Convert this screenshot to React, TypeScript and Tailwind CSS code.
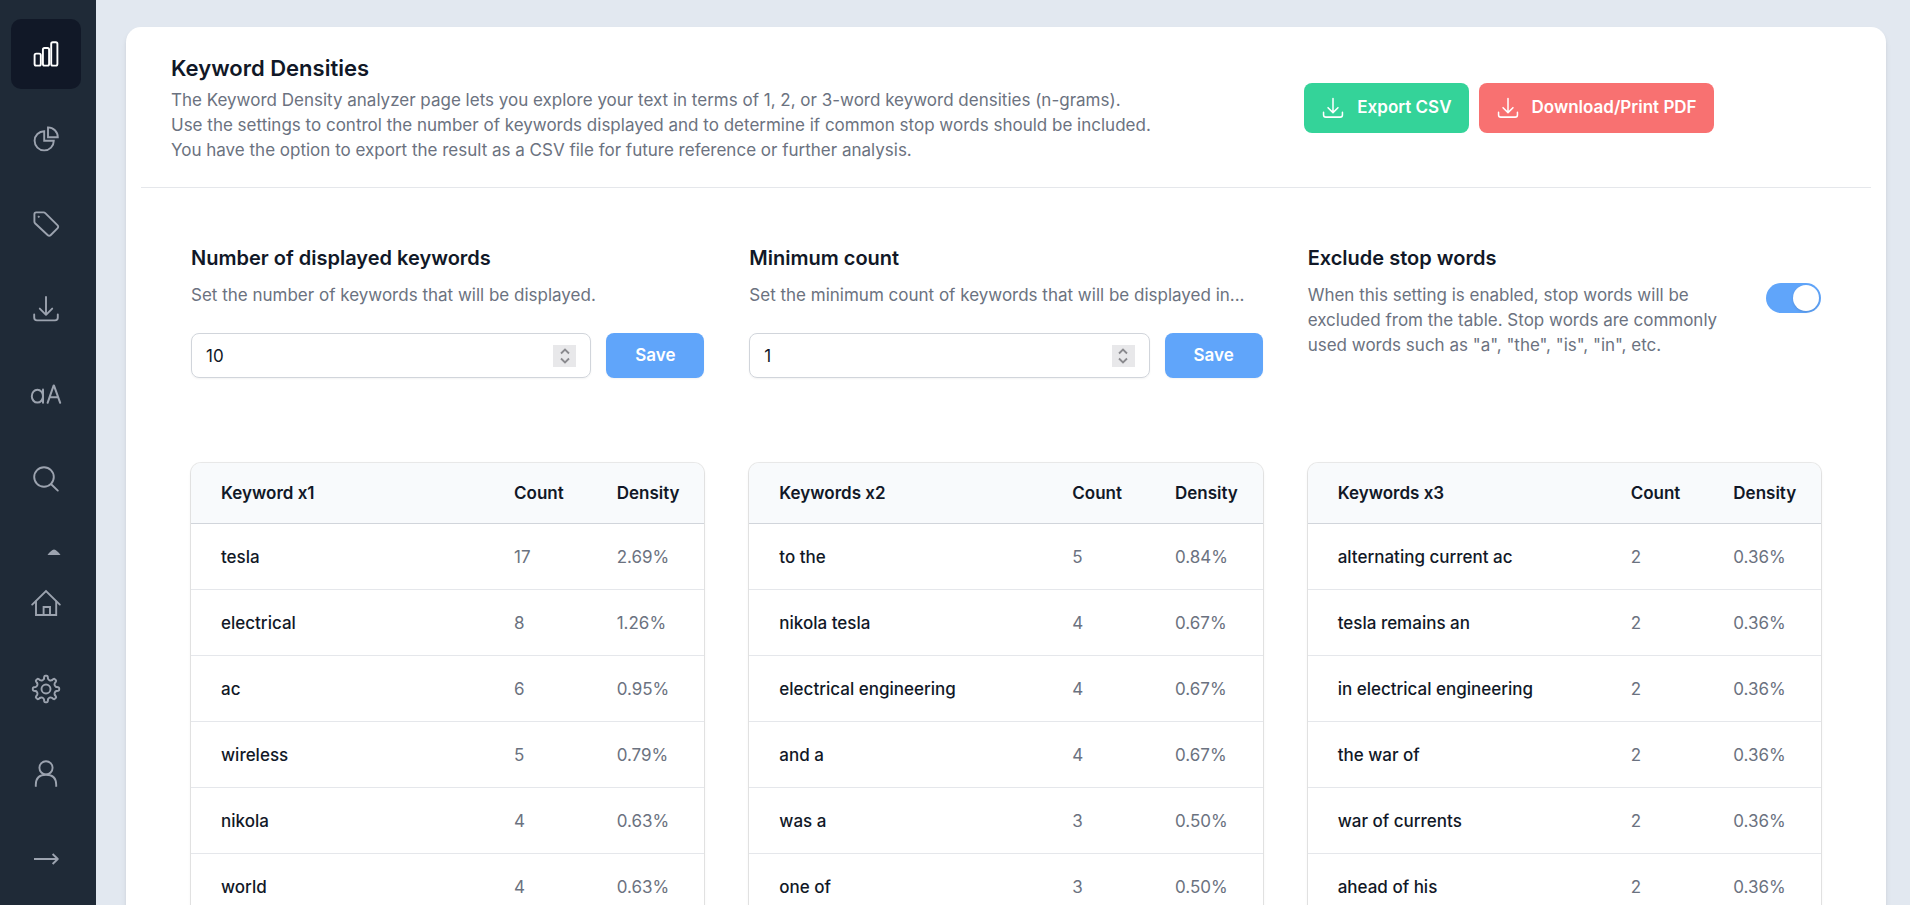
import React, { useState } from "react";

type IconProps = { className?: string };

const stroke = {
  fill: "none",
  stroke: "currentColor",
  strokeLinecap: "round" as const,
  strokeLinejoin: "round" as const,
};

const BarsIcon = ({ className }: IconProps) => (
  <svg viewBox="0 0 30 30" strokeWidth="1.9" {...stroke} className={className}>
    <rect x="3.6" y="14.6" width="6.2" height="12" rx="1.6" />
    <rect x="11.9" y="9" width="6.2" height="17.6" rx="1.6" />
    <rect x="20.2" y="3.2" width="6.2" height="23.4" rx="1.6" />
  </svg>
);

const PieIcon = ({ className }: IconProps) => (
  <svg viewBox="0 0 30 30" strokeWidth="1.9" {...stroke} className={className}>
    <path strokeLinejoin="miter" d="M13.2 7.2A9.6 9.6 0 1 0 22.8 16.8H13.2Z" />
    <path strokeLinejoin="miter" d="M17 3.4V13.2H26.8A9.8 9.8 0 0 0 17 3.4Z" />
  </svg>
);

const TagIcon = ({ className }: IconProps) => (
  <svg viewBox="0 0 30 30" strokeWidth="1.9" {...stroke} className={className}>
    <path d="M5.2 3.4H12.6Q13.6 3.4 14.3 4.1L26.4 16.2Q28 17.8 26.4 19.4L19.8 26Q18.2 27.6 16.6 26L4 14.2Q3.4 13.4 3.4 12.4V5.2Q3.4 3.4 5.2 3.4Z" />
    <circle cx="7.6" cy="7.8" r="0.7" fill="currentColor" strokeWidth="0.6" />
  </svg>
);

const DownloadIcon = ({ className }: IconProps) => (
  <svg viewBox="0 0 30 30" strokeWidth="1.9" {...stroke} className={className}>
    <path d="M15 3V20.6M8.8 14.6L15 20.8L21.2 14.6" />
    <path d="M3.2 20.4V23.6Q3.2 26.4 6 26.4H24Q26.8 26.4 26.8 23.6V20.4" />
  </svg>
);

const CaseIcon = ({ className }: IconProps) => (
  <svg viewBox="0 0 34 30" strokeWidth="2" {...stroke} className={className}>
    <ellipse cx="8.4" cy="17.2" rx="5.6" ry="6.4" />
    <path d="M14 10.6V23.8" />
    <path d="M18.6 23.8L24.6 6.6H25L31.2 23.8M20.7 18.2H29.2" />
  </svg>
);

const SearchIcon = ({ className }: IconProps) => (
  <svg viewBox="0 0 30 30" strokeWidth="1.9" {...stroke} className={className}>
    <circle cx="13" cy="13" r="9.8" />
    <path d="M20.2 20.2L26.8 26.6" />
  </svg>
);

const HomeIcon = ({ className }: IconProps) => (
  <svg viewBox="0 0 30 30" strokeWidth="1.9" {...stroke} className={className}>
    <path strokeLinejoin="miter" d="M1.2 15.6L15 2L28.8 15.6" />
    <path strokeLinejoin="miter" d="M5 12.4V26H25.2V12.4M12.6 26V18H19V26" />
  </svg>
);

const GEAR_TOOTH = "M-2 -10.4L-1.8 -12.2Q-1.6 -13.2 -0.8 -13.2H0.8Q1.6 -13.2 1.8 -12.2L2 -10.4A2.9 2.9 0 0 0 5.94 -8.77";

const GearIcon = ({ className }: IconProps) => (
  <svg viewBox="-15 -15 30 30" strokeWidth="1.9" {...stroke} className={className}>
    <circle r="4.5" />
    {[0, 45, 90, 135, 180, 225, 270, 315].map((angle) => (
      <path key={angle} d={GEAR_TOOTH} transform={`rotate(${angle})`} />
    ))}
  </svg>
);

const UserIcon = ({ className }: IconProps) => (
  <svg viewBox="0 0 30 30" strokeWidth="1.9" {...stroke} className={className}>
    <circle cx="15" cy="8.8" r="6.6" />
    <path strokeLinecap="butt" d="M4.8 27.8V25.8Q4.8 15.8 15 15.8Q25.2 15.8 25.2 25.8V27.8" />
  </svg>
);

const ArrowIcon = ({ className }: IconProps) => (
  <svg viewBox="0 0 30 30" strokeWidth="1.9" {...stroke} className={className}>
    <path strokeLinecap="butt" d="M3 15H26.6M21.6 10L26.8 15L21.6 20" />
  </svg>
);

const topLinks = [
  { label: "Keyword densities", Icon: BarsIcon, size: "size-[30px]", active: true },
  { label: "Statistics", Icon: PieIcon, size: "size-[30px]" },
  { label: "Tags", Icon: TagIcon, size: "size-[30px]" },
  { label: "Export", Icon: DownloadIcon, size: "size-[30px]" },
  { label: "Letter case", Icon: CaseIcon, size: "w-[34px] h-[30px]" },
  { label: "Search", Icon: SearchIcon, size: "size-[30px]" },
];

const bottomLinks = [
  { label: "Home", Icon: HomeIcon, size: "size-[30px]" },
  { label: "Settings", Icon: GearIcon, size: "size-[30px]" },
  { label: "Account", Icon: UserIcon, size: "size-[30px]" },
  { label: "Expand", Icon: ArrowIcon, size: "size-[30px]" },
];

type NavLink = (typeof topLinks)[number];

const NavList = ({ links }: { links: NavLink[] }) => (
  <ul className="flex flex-col gap-[15px]">
    {links.map(({ label, Icon, size, active }) => (
      <li key={label}>
        <a
          href="#"
          aria-label={label}
          className={`flex size-[70px] items-center justify-center rounded-[10px] ${
            active ? "bg-[#111827] text-white" : "text-[#9ca3af] hover:text-white"
          }`}
        >
          <Icon className={size} />
        </a>
      </li>
    ))}
  </ul>
);

const Sidebar = () => (
  <nav className="flex w-24 shrink-0 flex-col bg-[#1f2a37] pt-[19px] pl-[11px]">
    <NavList links={topLinks} />
    <div className="flex h-[55px] w-[70px] items-center justify-end pt-5 pr-5">
      <svg viewBox="0 0 14 6" className="h-[6px] w-[14px] text-[#9ca3af]" fill="currentColor">
        <path d="M0.5 6Q4 1 7 0.5Q10 1 13.5 6Z" />
      </svg>
    </div>
    <NavList links={bottomLinks} />
  </nav>
);

type NumberSettingProps = {
  id: string;
  title: string;
  description: string;
  initial: number;
};

const NumberSetting = ({ id, title, description, initial }: NumberSettingProps) => {
  const [value, setValue] = useState(String(initial));

  return (
    <div className="min-w-0">
      <label htmlFor={id} className="block text-xl leading-[30px] font-semibold text-[#111827]">
        {title}
      </label>
      <p className="mt-[10px] text-[#6b7280]">{description}</p>
      <div className="mt-[25px] flex gap-[15px]">
        <div className="relative flex-1">
          <input
            id={id}
            type="number"
            value={value}
            onChange={(e) => setValue(e.target.value)}
            className="h-[45px] w-full appearance-none rounded-lg border border-[#d1d5db] px-[14px] text-[#111827] shadow-xs [appearance:textfield] [&::-webkit-inner-spin-button]:appearance-none"
          />
          <span className="pointer-events-none absolute top-3 right-[15px] flex h-[22px] w-[23px] items-center justify-center bg-[#e8e8ea] text-[#8a8a8e]">
            <svg viewBox="0 0 12 16" className="h-4 w-3" strokeWidth="1.8" fill="none" stroke="currentColor">
              <path d="M2 5.5L6 1.5L10 5.5M2 10.5L6 14.5L10 10.5" />
            </svg>
          </span>
        </div>
        <button className="h-[45px] w-[98px] rounded-lg bg-[#60a5fa] font-semibold text-white shadow-xs">
          Save
        </button>
      </div>
    </div>
  );
};

const StopWords = () => {
  const [enabled, setEnabled] = useState(true);

  return (
    <div>
      <h2 className="text-xl leading-[30px] font-semibold text-[#111827]">Exclude stop words</h2>
      <div className="mt-[10px] flex items-start justify-between gap-[30px]">
        <label htmlFor="stop-words" className="text-[#6b7280]">
          When this setting is enabled, stop words will be excluded from the table. Stop words are
          commonly used words such as "a", "the", "is", "in", etc.
        </label>
        <button
          id="stop-words"
          role="switch"
          aria-checked={enabled}
          onClick={() => setEnabled(!enabled)}
          className={`flex h-[30px] w-[55px] shrink-0 items-center rounded-full p-0.5 ${
            enabled ? "justify-end bg-[#60a5fa]" : "justify-start bg-[#e5e7eb]"
          }`}
        >
          <span className="size-[26px] rounded-full bg-white shadow-sm" />
        </button>
      </div>
    </div>
  );
};

type Row = [string, number, string];

const tables: { title: string; rows: Row[] }[] = [
  {
    title: "Keyword x1",
    rows: [
      ["tesla", 17, "2.69%"],
      ["electrical", 8, "1.26%"],
      ["ac", 6, "0.95%"],
      ["wireless", 5, "0.79%"],
      ["nikola", 4, "0.63%"],
      ["world", 4, "0.63%"],
    ],
  },
  {
    title: "Keywords x2",
    rows: [
      ["to the", 5, "0.84%"],
      ["nikola tesla", 4, "0.67%"],
      ["electrical engineering", 4, "0.67%"],
      ["and a", 4, "0.67%"],
      ["was a", 3, "0.50%"],
      ["one of", 3, "0.50%"],
    ],
  },
  {
    title: "Keywords x3",
    rows: [
      ["alternating current ac", 2, "0.36%"],
      ["tesla remains an", 2, "0.36%"],
      ["in electrical engineering", 2, "0.36%"],
      ["the war of", 2, "0.36%"],
      ["war of currents", 2, "0.36%"],
      ["ahead of his", 2, "0.36%"],
    ],
  },
];

const KeywordTable = ({ title, rows }: { title: string; rows: Row[] }) => (
  <div className="overflow-hidden rounded-t-[10px] shadow-sm ring-1 ring-black/8">
    <table className="w-full table-fixed text-left">
      <thead className="bg-[#f8fafc] text-[#111827]">
        <tr className="h-[60px] border-b border-[#d1d5db]">
          <th className="w-3/5 pt-0.5 pl-[30px] font-semibold">{title}</th>
          <th className="w-1/5 pt-0.5 pl-[15px] font-semibold">Count</th>
          <th className="w-1/5 pt-0.5 pl-[15px] font-semibold">Density</th>
        </tr>
      </thead>
      <tbody className="divide-y divide-[#e5e7eb] text-[#6b7280]">
        {rows.map(([keyword, count, density]) => (
          <tr key={keyword} className="h-[66px]">
            <td className="pt-0.5 pl-[30px] font-medium text-[#111827]">{keyword}</td>
            <td className="pt-0.5 pl-[15px]">{count}</td>
            <td className="pt-0.5 pl-[15px]">{density}</td>
          </tr>
        ))}
      </tbody>
    </table>
  </div>
);

const App = () => {
  return (
    <div className="flex h-screen overflow-hidden bg-[#e2e8f0] font-['Inter',sans-serif] text-[17px] leading-[25px]">
      <Sidebar />
      <main className="min-w-0 flex-1 pt-[27px] pr-6 pl-[30px]">
        <div className="rounded-t-[15px] bg-white px-[15px] shadow-md">
          <header className="flex items-center border-b border-[#e5e7eb] px-[30px] pt-[25px] pb-6">
            <div className="w-2/3 shrink-0">
              <h1 className="text-[22px] leading-[32px] font-semibold text-[#111827]">
                Keyword Densities
              </h1>
              <p className="mt-1 text-[#6b7280]">
                The Keyword Density analyzer page lets you explore your text in terms of 1, 2, or
                3-word keyword densities (n-grams).
                <br />
                Use the settings to control the number of keywords displayed and to determine if
                common stop words should be included.
                <br />
                You have the option to export the result as a CSV file for future reference or
                further analysis.
              </p>
            </div>
            <div className="flex gap-[10px] pl-5">
              <button className="flex h-[50px] items-center gap-3 rounded-lg bg-[#34d399] px-[17px] font-semibold whitespace-nowrap text-white">
                <DownloadIcon className="size-6" />
                Export CSV
              </button>
              <button className="flex h-[50px] items-center gap-3 rounded-lg bg-[#f87171] px-[17px] font-semibold whitespace-nowrap text-white">
                <DownloadIcon className="size-6" />
                Download/Print PDF
              </button>
            </div>
          </header>

          <section className="grid grid-cols-3 gap-[45px] px-[50px] pt-[55px]">
            <NumberSetting
              id="displayed-keywords"
              title="Number of displayed keywords"
              description="Set the number of keywords that will be displayed."
              initial={10}
            />
            <NumberSetting
              id="minimum-count"
              title="Minimum count"
              description="Set the minimum count of keywords that will be displayed in..."
              initial={1}
            />
            <StopWords />
          </section>

          <section className="grid grid-cols-3 gap-[45px] px-[50px] pt-[85px]">
            {tables.map((table) => (
              <KeywordTable key={table.title} {...table} />
            ))}
          </section>
        </div>
      </main>
    </div>
  );
};

export default App;
